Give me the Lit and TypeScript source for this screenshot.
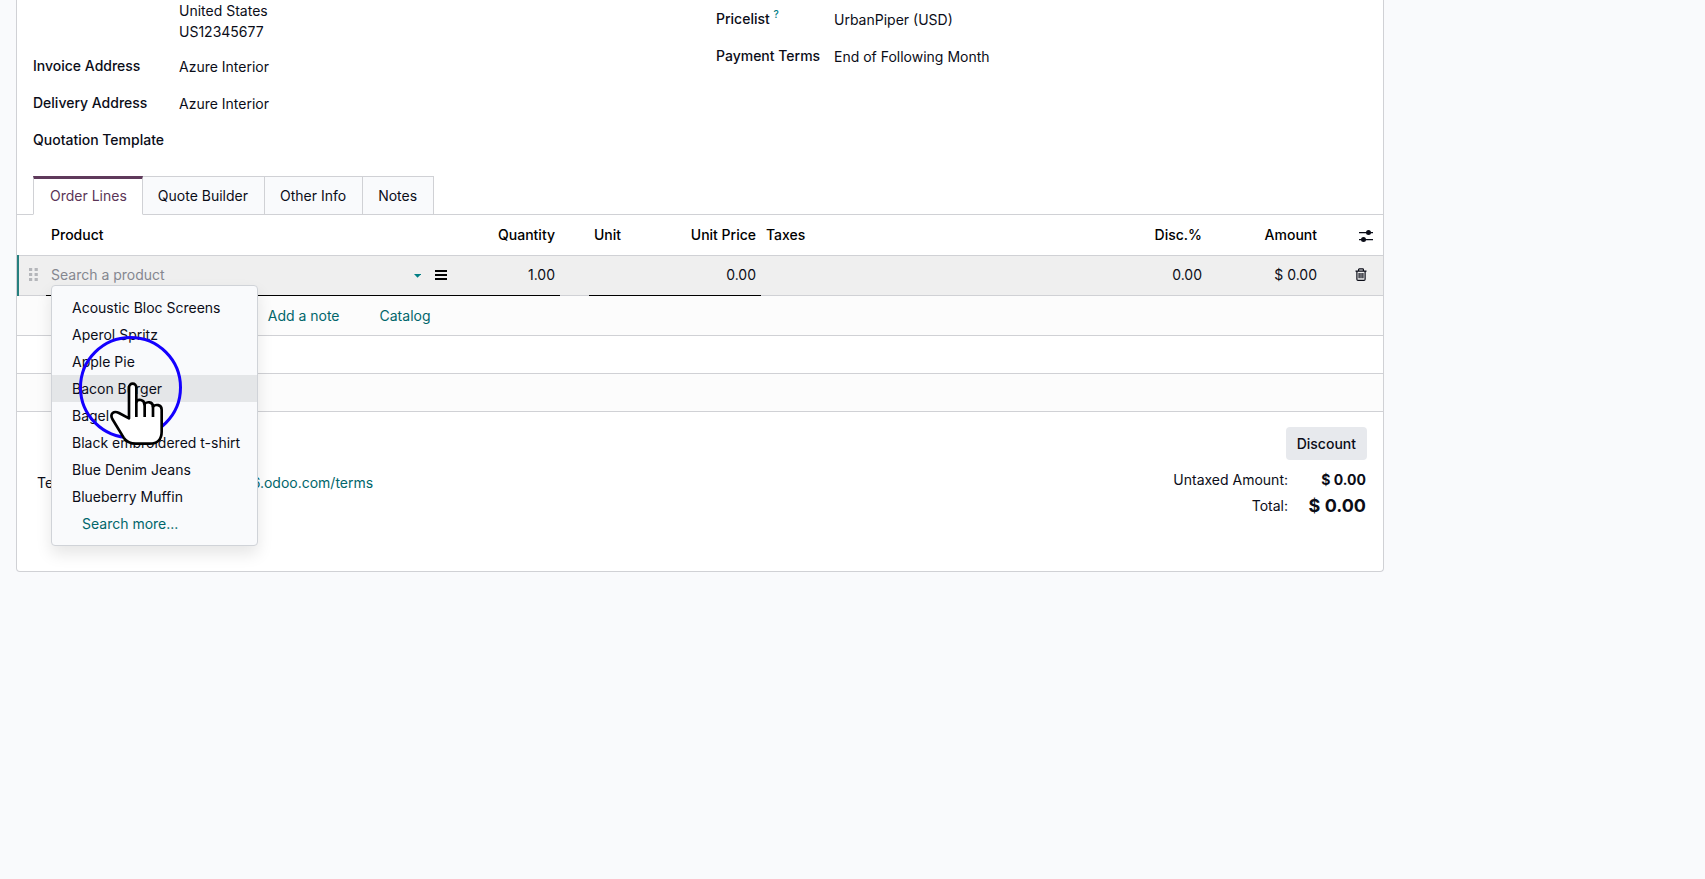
import { LitElement, html, css, svg } from "lit";
import { customElement, state } from "lit/decorators.js";
import { classMap } from "lit/directives/class-map.js";

const PRODUCTS = [
  "Acoustic Bloc Screens",
  "Aperol Spritz",
  "Apple Pie",
  "Bacon Burger",
  "Bagel",
  "Black embroidered t-shirt",
  "Blue Denim Jeans",
  "Blueberry Muffin",
];

const TABS = ["Order Lines", "Quote Builder", "Other Info", "Notes"];

@customElement("product-menu")
export class ProductMenu extends LitElement {
  @state() active = "Bacon Burger";

  static styles = css`
    :host {
      display: block;
      box-sizing: border-box;
      position: relative;
      padding: 8px 0;
      border: 1px solid #d0d3d8;
      border-radius: 4px;
      background: #f9fafc;
      box-shadow: 0 8px 16px rgba(0, 0, 0, 0.1);
    }
    .item {
      display: block;
      box-sizing: border-box;
      width: 100%;
      padding: 3px 20px;
      border: 0;
      background: none;
      color: #0b0d18;
      font: inherit;
      line-height: 21px;
      text-align: left;
      white-space: nowrap;
      cursor: pointer;
    }
    .active {
      background: #e4e6e8;
    }
    .more {
      padding-left: 30px;
      color: #01666b;
    }
    .ring {
      position: absolute;
      left: 27px;
      top: 50px;
      box-sizing: border-box;
      width: 103px;
      height: 103px;
      border: 3px solid #1400ff;
      border-radius: 50%;
      pointer-events: none;
    }
    .hand {
      position: absolute;
      left: 57px;
      top: 95px;
      pointer-events: none;
    }
  `;

  render() {
    return html`
      ${PRODUCTS.map(
        (name) => html`<button
          type="button"
          class=${classMap({ item: true, active: name === this.active })}
          @mouseenter=${() => (this.active = name)}
        >${name}</button>`
      )}
      <button type="button" class="item more">Search more...</button>
      <span class="ring"></span>
      <svg class="hand" width="55" height="65" viewBox="204 303 165 195" aria-hidden="true">
        <path
          d="M264 415V323C264 307 286 307 286 323V366C290 356 310 358 310 373C316 364 336 364 336 380C343 372 362 373 362 389V455C362 478 349 491 326 491H284C266 491 257 486 248 473L214 417C206 401 218 391 234 399Z"
          fill="#fff" stroke="#000" stroke-width="8" stroke-linejoin="round"
        />
        <path d="M286 362V411M311 371V411M336 378V411" fill="none" stroke="#000" stroke-width="8" stroke-linecap="butt" />
      </svg>
    `;
  }
}

@customElement("app-root")
export class AppRoot extends LitElement {
  @state() tab = "Order Lines";

  static styles = css`
    :host {
      display: block;
      min-height: 100vh;
      background: #f9fafc;
      color: #0b0d18;
      font-family: Inter, "Liberation Sans", sans-serif;
      font-size: 14px;
      line-height: 21px;
    }
    .page {
      display: grid;
      grid-template-columns: minmax(0, 1fr) 305px;
      column-gap: 16px;
      padding-left: 16px;
    }
    .sheet {
      border: 1px solid #d0d1d5;
      border-top: 0;
      border-radius: 0 0 4px 4px;
      background: #fff;
      padding-bottom: 55px;
    }
    .groups {
      display: grid;
      grid-template-columns: 1fr 1fr;
      column-gap: 32px;
      padding: 0 16px;
    }
    .group {
      display: grid;
      align-content: start;
      margin: 0;
    }
    .left {
      grid-template-columns: 146px 1fr;
    }
    .right {
      grid-template-columns: 118px 1fr;
    }
    dt {
      padding: 8px 0;
      font-weight: 500;
    }
    dd {
      margin: 0;
      padding-top: 9px;
    }
    .address {
      grid-column: 2;
      padding: 0 0 5px;
    }
    .help {
      color: #017e84;
      font-size: 10px;
      line-height: 0;
      vertical-align: super;
    }
    .tabs {
      display: flex;
      margin-top: 18px;
      padding: 0 16px;
      border-bottom: 1px solid #d0d1d5;
    }
    .tab {
      margin: 0 0 -1px;
      padding: 8px 16px 8px 15px;
      border: 1px solid #d0d1d5;
      border-left: 0;
      background: #f9fafc;
      color: #0b0d18;
      font: inherit;
      line-height: 21px;
      cursor: pointer;
    }
    .tab.on {
      padding: 6px 15px 8px 16px;
      border-left: 1px solid #d0d1d5;
      border-top: 3px solid #5f3a5b;
      border-bottom-color: #fff;
      background: #fff;
      color: #5b3557;
    }
    .lines {
      width: 100%;
      table-layout: fixed;
      border-collapse: separate;
      border-spacing: 0;
    }
    .c-handle, .c-gap { width: 29px; }
    .c-product { width: 405px; }
    .c-qty { width: 109px; }
    .c-unit { width: 86px; }
    .c-disc { width: 107px; }
    .c-amount { width: 115px; }
    .c-act { width: 61px; }
    th, td {
      box-sizing: border-box;
      height: 40px;
      padding: 9px 5px 0;
      border-bottom: 1px solid #d0d1d5;
      text-align: left;
      vertical-align: top;
      white-space: nowrap;
    }
    th {
      height: 41px;
      color: #000;
      font-weight: 500;
    }
    .num {
      text-align: right;
    }
    .edit td {
      padding-top: 8px;
      background: #efefef;
    }
    .edit .under {
      border-bottom-color: #000;
    }
    .edit .grip {
      position: relative;
      padding: 12px 0 0 12px;
    }
    .grip::before {
      content: "";
      position: absolute;
      left: 0;
      top: -1px;
      bottom: -1px;
      width: 2px;
      background: #26807f;
    }
    svg {
      display: block;
    }
    .edit .product {
      position: relative;
      padding-right: 4px;
    }
    .picker {
      display: flex;
      align-items: center;
      gap: 14px;
    }
    input {
      display: block;
      box-sizing: border-box;
      width: 100%;
      height: 21px;
      min-width: 0;
      margin: 0;
      padding: 0;
      border: 0;
      outline: 0;
      background: none;
      color: inherit;
      font: inherit;
      line-height: 21px;
      text-align: inherit;
    }
    input::placeholder {
      color: #85878f;
      opacity: 1;
    }
    .icon {
      display: flex;
      align-items: center;
      height: 21px;
      padding: 0;
      border: 0;
      background: none;
      color: #0b0d18;
      cursor: pointer;
    }
    product-menu {
      position: absolute;
      left: 5px;
      top: 29px;
      width: 207px;
      z-index: 2;
    }
    .act {
      padding-left: 37px;
    }
    .edit .trash {
      padding-left: 33px;
    }
    .soft td {
      background: #fcfcfc;
    }
    .blank td {
      height: 38px;
    }
    .adders {
      display: flex;
      gap: 16px;
    }
    .link {
      padding: 0;
      border: 0;
      background: none;
      color: #01666b;
      font: inherit;
      line-height: 21px;
      text-decoration: none;
      cursor: pointer;
    }
    .catalog {
      margin-left: 24px;
    }
    .foot {
      display: flex;
      justify-content: space-between;
      align-items: flex-start;
      padding: 15px 16px 0 20px;
    }
    .terms {
      margin: 45px 0 0;
    }
    .summary {
      display: grid;
      justify-items: end;
      row-gap: 9px;
    }
    .discount {
      padding: 6px 11px;
      border: 0;
      border-radius: 4px;
      background: #e7e9ed;
      color: #0b0d18;
      font: inherit;
      font-weight: 500;
      line-height: 21px;
      cursor: pointer;
    }
    .totals {
      display: grid;
      grid-template-columns: auto 78px;
      row-gap: 5px;
      margin: 0;
      padding-right: 1px;
      text-align: right;
    }
    .totals dt, .totals dd {
      padding: 0;
      font-weight: 400;
    }
    .totals dd {
      font-weight: 700;
    }
    .totals .big {
      font-size: 18px;
    }
  `;

  private trashIcon() {
    return svg`<g fill="none" stroke="currentColor" stroke-width="1.2">
      <path d="M0.5 3.1H11.5M3.6 3V1.6Q3.6 0.9 4.3 0.9H7.7Q8.4 0.9 8.4 1.6V3M1.9 3.2V11.2Q1.9 12.3 3 12.3H9Q10.1 12.3 10.1 11.2V3.2"/>
      <path d="M4.1 5V10.3M6 5V10.3M7.9 5V10.3"/>
    </g>`;
  }

  render() {
    return html`
      <main class="page">
        <section class="sheet">
          <div class="groups">
            <dl class="group left">
              <dd class="address">United States<br />US12345677</dd>
              <dt>Invoice Address</dt>
              <dd>Azure Interior</dd>
              <dt>Delivery Address</dt>
              <dd>Azure Interior</dd>
              <dt>Quotation Template</dt>
              <dd></dd>
            </dl>
            <dl class="group right">
              <dt>Pricelist <span class="help">?</span></dt>
              <dd>UrbanPiper (USD)</dd>
              <dt>Payment Terms</dt>
              <dd>End of Following Month</dd>
            </dl>
          </div>

          <div class="tabs" role="tablist">
            ${TABS.map(
              (t) => html`<button
                type="button"
                role="tab"
                aria-selected=${t === this.tab ? "true" : "false"}
                class=${classMap({ tab: true, on: t === this.tab })}
                @click=${() => (this.tab = t)}
              >${t}</button>`
            )}
          </div>

          <table class="lines">
            <colgroup>
              <col class="c-handle" /><col class="c-product" /><col class="c-qty" /><col class="c-gap" />
              <col class="c-unit" /><col class="c-unit" /><col /><col class="c-disc" />
              <col class="c-amount" /><col class="c-act" />
            </colgroup>
            <thead>
              <tr>
                <th></th>
                <th>Product</th>
                <th class="num">Quantity</th>
                <th></th>
                <th>Unit</th>
                <th class="num">Unit Price</th>
                <th>Taxes</th>
                <th class="num">Disc.%</th>
                <th class="num">Amount</th>
                <th class="act">
                  <button type="button" class="icon" aria-label="Optional columns">
                    <svg width="14" height="14" viewBox="0 -2 14 14">
                      <path d="M0 2.6H14M0 9.6H14" stroke="currentColor" stroke-width="1.2" />
                      <circle cx="9.5" cy="2.6" r="2.5" fill="currentColor" />
                      <circle cx="4.5" cy="9.4" r="2.5" fill="currentColor" />
                    </svg>
                  </button>
                </th>
              </tr>
            </thead>
            <tbody>
              <tr class="edit">
                <td class="grip">
                  <svg width="9" height="13" viewBox="0 0 9 13" fill="#b4b6ba">
                    <path d="M0 0h3.2v3H0zM5.6 0h3.2v3H5.6zM0 5h3.2v3H0zM5.6 5h3.2v3H5.6zM0 10h3.2v3H0zM5.6 10h3.2v3H5.6z" />
                  </svg>
                </td>
                <td class="product under">
                  <div class="picker">
                    <input type="text" placeholder="Search a product" aria-label="Product" />
                    <svg width="8" height="6" viewBox="0 -2 8 6"><path d="M0 0H8L4 4Z" fill="#017e84" /></svg>
                    <button type="button" class="icon" aria-label="Edit description">
                      <svg width="12" height="10" viewBox="0 0 12 10">
                        <path d="M0 1H12M0 5H12M0 9H12" stroke="#000" stroke-width="2" />
                      </svg>
                    </button>
                  </div>
                  <product-menu></product-menu>
                </td>
                <td class="num under"><input type="text" value="1.00" aria-label="Quantity" /></td>
                <td></td>
                <td class="under"><input type="text" aria-label="Unit" /></td>
                <td class="num under"><input type="text" value="0.00" aria-label="Unit Price" /></td>
                <td></td>
                <td class="num"><input type="text" value="0.00" aria-label="Disc.%" /></td>
                <td class="num">$ 0.00</td>
                <td class="act trash">
                  <button type="button" class="icon" aria-label="Delete row">
                    <svg width="12" height="13" viewBox="0 0 12 13">${this.trashIcon()}</svg>
                  </button>
                </td>
              </tr>
              <tr class="soft">
                <td></td>
                <td colspan="9">
                  <div class="adders">
                    <button type="button" class="link">Add a product</button>
                    <button type="button" class="link">Add a section</button>
                    <button type="button" class="link">Add a note</button>
                    <button type="button" class="link catalog">Catalog</button>
                  </div>
                </td>
              </tr>
              <tr class="blank"><td colspan="10"></td></tr>
              <tr class="blank soft"><td colspan="10"></td></tr>
            </tbody>
          </table>

          <div class="foot">
            <p class="terms">
              Terms &amp; Conditions: <a class="link" href="#terms">https://saas6.odoo.com/terms</a>
            </p>
            <div class="summary">
              <button type="button" class="discount">Discount</button>
              <dl class="totals">
                <dt>Untaxed Amount:</dt>
                <dd>$ 0.00</dd>
                <dt>Total:</dt>
                <dd class="big">$ 0.00</dd>
              </dl>
            </div>
          </div>
        </section>
      </main>
    `;
  }
}
